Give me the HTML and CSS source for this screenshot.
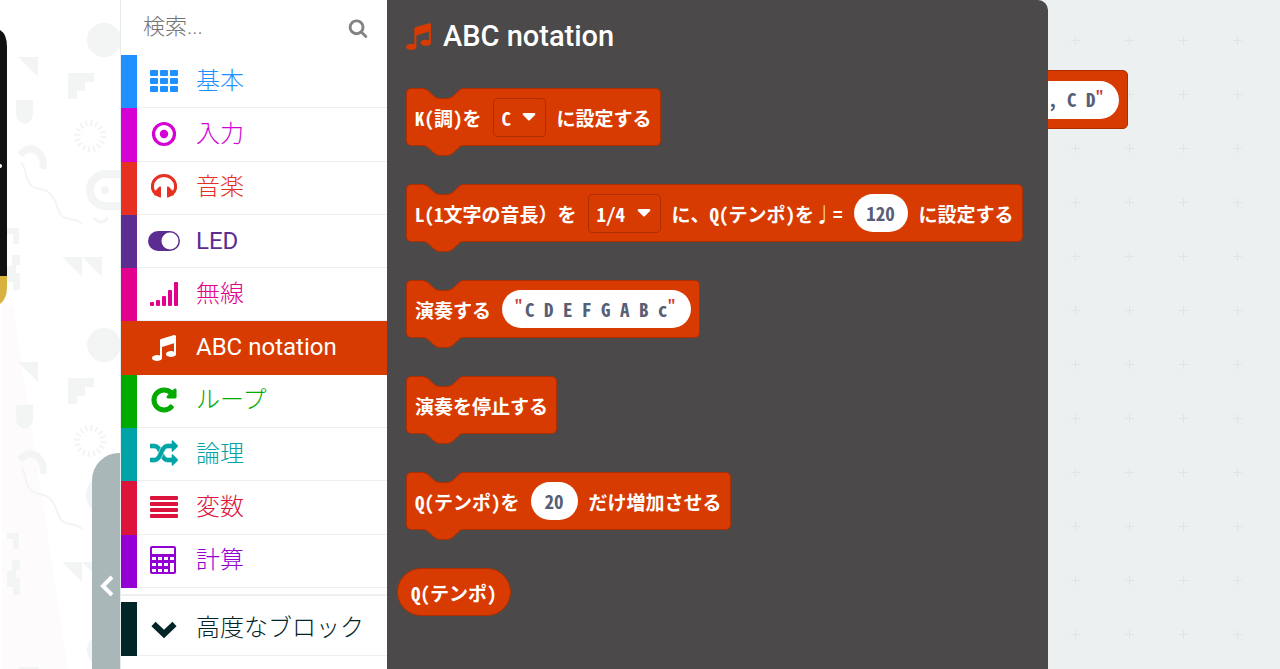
FILE: index.html
```html
<!DOCTYPE html>
<html lang="ja">

<head>
    <meta charset="UTF-8">
    <meta name="viewport" content="width=device-width, initial-scale=1.0">
    <title>ABC notation</title>
    <link rel="stylesheet" href="styles.css">
</head>

<body>
    <!-- shared shapes -->
    <svg class="defs" aria-hidden="true">
        <symbol id="music" viewBox="0 0 1792 1792">
            <path d="M1664 224v1120q0 50-34 89t-86 60.500-103.500 32-96.500 10.500-96.500-10.500-103.500-32-86-60.500-34-89 34-89 86-60.500 103.500-32 96.500-10.500q105 0 192 39v-537l-768 237v709q0 50-34 89t-86 60.500-103.500 32-96.500 10.500-96.500-10.500-103.500-32-86-60.500-34-89 34-89 86-60.500 103.500-32 96.500-10.500q105 0 192 39v-967q0-31 19-56.500t49-35.500l832-256q12-4 28-4 40 0 68 28t28 68z" />
        </symbol>
        <symbol id="tab" viewBox="0 0 42 12">
            <path d="M0 0H1Q5 0 8 3L12 7Q15 10 18 10H27Q30 10 33 7L37 3Q40 0 42 0Z" />
            <path class="edge" d="M0 .5H1Q5 .5 8 3.500L12 7.500Q15 10.500 18 10.500H27Q30 10.500 33 7.500L37 3.500Q40 .5 42 .5" />
        </symbol>
        <symbol id="doodles" viewBox="0 0 121 305" overflow="visible">
            <circle cx="104" cy="40" r="17" />
            <path d="M18 57h20v20zM68 73h26v9h-9v9h-8v8h-9zM16 100h17v14a8 9 0 0 1-17 0zM62 257h20v20zM82 257h20v20z" />
            <path d="M7 228h12v16h-6v-10H7zM12 255h8v10h-4v8h4v17h-7v-8H7v-16h5z" />
            <circle class="line" cx="90" cy="136" r="13" stroke-width="6" stroke-dasharray="2 3.100" />
            <path class="line" stroke-width="7" d="M20 155Q28 145 37 151Q45 158 43 169" />
            <path class="line" stroke-width="2" d="M21 163C28 169 23 179 32 186C41 192 46 186 54 199C59 208 58 218 70 219Q78 220 82 224" />
            <path class="line" stroke-width="8" d="M121 174H106a16 16 0 0 0 0 32H121" />
            <circle cx="105" cy="190" r="4" />
            <path class="line" stroke-width="3" d="M94 218Q101 226 108 218" />
        </symbol>
    </svg>

    <main class="editor">
        <aside class="simulator">
            <svg class="wallpaper" aria-hidden="true">
                <path class="beam" d="M2 305h11l55 364H2z" />
                <g class="doodles">
                    <use href="#doodles" width="121" height="305" />
                    <use href="#doodles" y="305" width="121" height="305" />
                    <use href="#doodles" y="610" width="121" height="305" />
                </g>
            </svg>
            <svg class="board" viewBox="0 0 8 275" aria-hidden="true">
                <path fill="#111" d="M0 1Q7 5 7 18V247H0z" />
                <path fill="#d8b13f" d="M0 247H7V258Q7 270 0 275z" />
                <circle cx="0" cy="137" r="2" fill="#fff" />
            </svg>
            <button class="collapse" aria-label="シミュレーターを隠す">
                <svg viewBox="0 0 16 24"><path d="M13 3L4 12L13 21" /></svg>
            </button>
        </aside>

        <nav class="toolbox">
            <div class="search">
                <input type="text" placeholder="検索..." aria-label="検索">
                <svg viewBox="0 0 1792 1792" aria-hidden="true">
                    <path d="M1216 832q0-185-131.500-316.500t-316.500-131.500-316.500 131.500-131.500 316.500 131.500 316.500 316.500 131.500 316.500-131.500 131.500-316.500zm512 832q0 52-38 90t-90 38q-54 0-90-38l-343-342q-179 124-399 124-143 0-273.500-55.500t-225-150-150-225-55.500-273.500 55.500-273.500 150-225 225-150 273.500-55.500 273.500 55.500 225 150 150 225 55.500 273.500q0 220-124 399l343 343q37 37 37 90z" />
                </svg>
            </div>
            <ul class="categories">
                <li><a class="basic" href="#basic">
                    <svg viewBox="0 0 28 28"><path d="M1 3h6q1 0 1 1v4q0 1-1 1H1Q0 9 0 8V4q0-1 1-1zM11 3h6q1 0 1 1v4q0 1-1 1h-6q-1 0-1-1V4q0-1 1-1zM21 3h6q1 0 1 1v4q0 1-1 1h-6q-1 0-1-1V4q0-1 1-1zM1 11h6q1 0 1 1v4q0 1-1 1H1q-1 0-1-1v-4q0-1 1-1zM11 11h6q1 0 1 1v4q0 1-1 1h-6q-1 0-1-1v-4q0-1 1-1zM21 11h6q1 0 1 1v4q0 1-1 1h-6q-1 0-1-1v-4q0-1 1-1zM1 19h6q1 0 1 1v4q0 1-1 1H1q-1 0-1-1v-4q0-1 1-1zM11 19h6q1 0 1 1v4q0 1-1 1h-6q-1 0-1-1v-4q0-1 1-1zM21 19h6q1 0 1 1v4q0 1-1 1h-6q-1 0-1-1v-4q0-1 1-1z" /></svg>
                    <span>基本</span></a></li>
                <li><a class="input" href="#input">
                    <svg viewBox="0 0 28 28"><circle cx="14" cy="14" r="10.500" fill="none" stroke="currentColor" stroke-width="3.200" /><circle cx="14" cy="14" r="4.200" /></svg>
                    <span>入力</span></a></li>
                <li><a class="sound" href="#sound">
                    <svg viewBox="0 0 28 28"><path d="M5 20Q2 17 2.500 13A11.500 10.500 0 0 1 25.500 13Q26 17 23 20" fill="none" stroke="currentColor" stroke-width="3" /><path d="M4 19L9 14Q11 12 11 15V23Q11 26 9 24L4 22zM24 19L19 14Q17 12 17 15V23Q17 26 19 24L24 22z" /></svg>
                    <span>音楽</span></a></li>
                <li><a class="led" href="#led">
                    <svg class="wide" viewBox="0 0 32 28"><path fill-rule="evenodd" d="M10 4H22a10 10 0 0 1 0 20H10a10 10 0 0 1 0-20zM22 5.500a8.500 8.500 0 0 0 0 17 8.500 8.500 0 0 0 0-17z" /></svg>
                    <span>LED</span></a></li>
                <li><a class="radio" href="#radio">
                    <svg viewBox="0 0 28 28"><path d="M1 22h2q1 0 1 1v2q0 1-1 1H1q-1 0-1-1v-2q0-1 1-1zM7 20h2q1 0 1 1v4q0 1-1 1H7q-1 0-1-1v-4q0-1 1-1zM13 16h2q1 0 1 1v8q0 1-1 1h-2q-1 0-1-1v-8q0-1 1-1zM19 10h2q1 0 1 1v14q0 1-1 1h-2q-1 0-1-1V11q0-1 1-1zM25 2h2q1 0 1 1v22q0 1-1 1h-2q-1 0-1-1V3q0-1 1-1z" /></svg>
                    <span>無線</span></a></li>
                <li><a class="abc selected" href="#abc">
                    <svg viewBox="0 0 28 28"><use href="#music" /></svg>
                    <span>ABC notation</span></a></li>
                <li><a class="loops" href="#loops">
                    <svg viewBox="0 0 1792 1792"><path stroke="currentColor" stroke-width="70" d="M1664 256v448q0 26-19 45t-45 19h-448q-42 0-59-40-17-39 14-69l138-138q-148-137-349-137-104 0-198.500 40.500t-163.500 109.500-109.500 163.500-40.500 198.500 40.500 198.500 109.500 163.500 163.500 109.500 198.500 40.500q119 0 225-52t179-147q7-10 23-12 15 0 25 9l137 138q9 8 9.500 20.500t-7.500 22.500q-109 132-264 204.500t-327 72.500q-156 0-298-61t-245-164-164-245-61-298 61-298 164-245 245-164 298-61q147 0 284.500 55.500t244.500 156.500l130-129q29-31 70-14 39 17 39 59z" /></svg>
                    <span>ループ</span></a></li>
                <li><a class="logic" href="#logic">
                    <svg viewBox="0 0 1792 1792"><path stroke="currentColor" stroke-width="40" d="M666 481q-60 92-137 273-22-45-37-72.500t-40.500-63.500-51-56.500-63-35-81.500-14.500h-224q-14 0-23-9t-9-23v-192q0-14 9-23t23-9h224q250 0 410 225zm1126 799q0 14-9 23l-320 320q-9 9-23 9-13 0-22.500-9.500t-9.500-22.500v-192q-32 0-85 .5t-81 1-73-1-71-5-64-10.500-63-18.500-58-28.500-59-40-55-53.500-56-69.500q59-93 136-273 22 45 37 72.500t40.500 63.500 51 56.500 63 35 81.500 14.500h256v-192q0-14 9-23t23-9q12 0 24 10l319 319q9 9 9 23zm0-896q0 14-9 23l-320 320q-9 9-23 9-13 0-22.500-9.500t-9.500-22.500v-192h-256q-48 0-87 15t-69 45-51 61.500-45 77.500q-32 62-78 171-29 66-49.500 111t-54 105-64 100-74 83-90 68.500-106.500 42-128 16.500h-224q-14 0-23-9t-9-23v-192q0-14 9-23t23-9h224q48 0 87-15t69-45 51-61.500 45-77.500q32-62 78-171 29-66 49.500-111t54-105 64-100 74-83 90-68.500 106.500-42 128-16.500h256v-192q0-14 9-23t23-9q12 0 24 10l319 319q9 9 9 23z" /></svg>
                    <span>論理</span></a></li>
                <li><a class="variables" href="#variables">
                    <svg viewBox="0 0 28 28"><path d="M1 3h26q1 0 1 1v2q0 1-1 1H1Q0 7 0 6V4q0-1 1-1zM1 9h26q1 0 1 1v2q0 1-1 1H1q-1 0-1-1v-2q0-1 1-1zM1 15h26q1 0 1 1v2q0 1-1 1H1q-1 0-1-1v-2q0-1 1-1zM1 21h26q1 0 1 1v2q0 1-1 1H1q-1 0-1-1v-2q0-1 1-1z" /></svg>
                    <span>変数</span></a></li>
                <li><a class="math" href="#math">
                    <svg viewBox="0 0 28 28"><path fill-rule="evenodd" d="M2 0h22q2 0 2 2v24q0 2-2 2H2q-2 0-2-2V2q0-2 2-2zM2 2v6h22V2zM2 11v3h4v-3zM8 11v3h4v-3zM14 11v3h4v-3zM20 11v3h4v-3zM2 17v3h4v-3zM8 17v3h4v-3zM14 17v3h4v-3zM20 17v9h4v-9zM2 23v3h4v-3zM8 23v3h4v-3zM14 23v3h4v-3z" /></svg>
                    <span>計算</span></a></li>
            </ul>
            <a class="advanced" href="#advanced">
                <svg viewBox="0 0 28 28"><path d="M3.500 10L14 20L24.500 10" fill="none" stroke="currentColor" stroke-width="6" /></svg>
                <span>高度なブロック</span></a>
        </nav>

        <section class="workspace">
            <svg class="grid" aria-hidden="true">
                <pattern id="cross" width="54" height="54" patternUnits="userSpaceOnUse">
                    <path d="M36 40.500h9M40.500 36v9" />
                </pattern>
                <rect width="100%" height="100%" fill="url(#cross)" />
            </svg>

            <div class="block placed">
                <label class="string"><q>"</q><input type="text" value=", C D" aria-label="メロディ"><q>"</q></label>
            </div>

            <div class="flyout">
                <h2><svg aria-hidden="true"><use href="#music" /></svg>ABC notation</h2>

                <div class="block">
                    <svg class="notch"><use href="#tab" /></svg>
                    <span>K(調)を</span>
                    <span class="pick">
                        <select aria-label="調"><option>C</option></select>
                        <svg viewBox="0 0 14 8"><path d="M2 0H12Q14 0 13 2L8 7Q7 8 6 7L1 2Q0 0 2 0Z" /></svg>
                    </span>
                    <span>に設定する</span>
                    <svg class="bump"><use href="#tab" /></svg>
                </div>

                <div class="block">
                    <svg class="notch"><use href="#tab" /></svg>
                    <span>L(1文字の音長）を</span>
                    <span class="pick length">
                        <select aria-label="音長"><option>1/4</option></select>
                        <svg viewBox="0 0 14 8"><path d="M2 0H12Q14 0 13 2L8 7Q7 8 6 7L1 2Q0 0 2 0Z" /></svg>
                    </span>
                    <span>に、Q(テンポ)を♩=</span>
                    <input class="number hundreds" type="text" value="120" aria-label="テンポ">
                    <span>に設定する</span>
                    <svg class="bump"><use href="#tab" /></svg>
                </div>

                <div class="block">
                    <svg class="notch"><use href="#tab" /></svg>
                    <span>演奏する</span>
                    <label class="string"><q>"</q><input class="melody" type="text" value="C D E F G A B c" aria-label="メロディ"><q>"</q></label>
                    <svg class="bump"><use href="#tab" /></svg>
                </div>

                <div class="block">
                    <svg class="notch"><use href="#tab" /></svg>
                    <span>演奏を停止する</span>
                    <svg class="bump"><use href="#tab" /></svg>
                </div>

                <div class="block">
                    <svg class="notch"><use href="#tab" /></svg>
                    <span>Q(テンポ)を</span>
                    <input class="number" type="text" value="20" aria-label="増加量">
                    <span>だけ増加させる</span>
                    <svg class="bump"><use href="#tab" /></svg>
                </div>

                <div class="block reporter">
                    <span>Q(テンポ)</span>
                </div>
            </div>
        </section>
    </main>
</body>

</html>
```

FILE: styles.css
```css
* {
    padding: 0;
    margin: 0;
    box-sizing: border-box;
}

body {
    font-family: Roboto, "Noto Sans CJK JP", sans-serif;
    background-color: #fff;
}

svg {
    display: block;
    flex: none;
    fill: currentColor;
}

.defs {
    position: absolute;
    width: 0;
    height: 0;
}

.editor {
    display: grid;
    grid-template-columns: 121px 266px 1fr;
    min-height: 100vh;
}

/* simulator */
.simulator {
    position: relative;
    overflow: hidden;
    border-right: 1px solid #e6eced;
}

.wallpaper {
    position: absolute;
    width: 100%;
    height: 100%;
}

.beam {
    fill: #fefbfc;
}

.doodles {
    fill: #f3f5f5;
    color: #f3f5f5;
}

.line {
    fill: none;
    stroke: #f3f5f5;
}

.board {
    position: absolute;
    top: 29px;
    left: 0;
    width: 8px;
    height: 275px;
}

.collapse {
    position: absolute;
    right: -1px;
    bottom: 0;
    width: 29px;
    height: 216px;
    padding-top: 50px;
    border: none;
    border-radius: 27px 0 0 0;
    background-color: #a9b7b8;
    cursor: pointer;
}

.collapse svg {
    width: 16px;
    height: 24px;
    margin-left: 7px;
    fill: none;
    stroke: #fff;
    stroke-width: 4;
}

/* toolbox */
.toolbox {
    background-color: #fff;
}

.search {
    display: flex;
    align-items: center;
    height: 55px;
    padding: 0 19px 0 22px;
    color: #838383;
}

.search input {
    flex: 1;
    min-width: 0;
    padding-bottom: 2px;
    border: none;
    outline: none;
    background: none;
    font-family: inherit;
    font-size: 22px;
    font-weight: 300;
}

.search input::placeholder {
    color: #757575;
}

.search svg {
    width: 20px;
    height: 20px;
}

.categories {
    display: grid;
    grid-auto-rows: 1fr;
    height: 533px;
    list-style: none;
}

.toolbox a {
    display: flex;
    align-items: center;
    gap: 18px;
    height: 100%;
    padding: 0 0 2px 13px;
    border-left: 16px solid;
    font-size: 24px;
    font-weight: 300;
    line-height: 36px;
    text-decoration: none;
    box-shadow: inset 0 -1px #ecf0f1;
}

.toolbox a svg {
    width: 28px;
    height: 28px;
}

.toolbox a .wide {
    width: 32px;
    margin: 0 -2px;
}

.toolbox .basic { color: #1e90ff; }
.toolbox .input { color: #d400d4; }
.toolbox .sound { color: #e63022; }
.toolbox .led { color: #5c2d91; font-weight: 400; }
.toolbox .radio { color: #e3008c; }
.toolbox .loops { color: #00aa00; }
.toolbox .logic { color: #00a4a6; }
.toolbox .variables { color: #dc143c; }
.toolbox .math { color: #9400d3; }

.toolbox .selected {
    color: #fff;
    font-weight: 400;
    background-color: #d83b01;
    border-left-color: #d83b01;
    box-shadow: none;
}

.toolbox .advanced {
    position: relative;
    height: 54px;
    margin-top: 14px;
    color: #022528;
}

.advanced::before {
    content: "";
    position: absolute;
    top: -8px;
    left: -16px;
    right: 0;
    height: 2px;
    background-color: #ecf0f1;
}

/* workspace */
.workspace {
    position: relative;
    overflow: hidden;
    background-color: #ecf0f1;
}

.grid {
    position: absolute;
    width: 100%;
    height: 100%;
}

.grid path {
    stroke: #dfe4e6;
}

.flyout {
    position: relative;
    display: flex;
    flex-direction: column;
    align-items: flex-start;
    gap: 38px;
    width: fit-content;
    min-height: 100%;
    padding: 20px 25px 20px 19px;
    border-radius: 0 10px 0 0;
    background-color: #4b4949;
}

.flyout h2 {
    display: flex;
    align-items: center;
    gap: 10px;
    height: 31px;
    margin-bottom: -1px;
    color: #fff;
    font-size: 29px;
    font-weight: 500;
}

.flyout h2 svg {
    width: 29px;
    height: 29px;
    margin-left: -2px;
    color: #d83b01;
}

.block {
    position: relative;
    display: flex;
    align-items: center;
    gap: 11px;
    height: 58px;
    padding: 0 8px;
    border: 1px solid #ad2f01;
    border-radius: 5px;
    background-color: #d83b01;
    color: #fff;
    font-family: "Noto Sans Mono CJK JP", "Noto Sans CJK JP", monospace;
    font-size: 19px;
    font-weight: 700;
    white-space: nowrap;
}

.block input,
.block select {
    border: none;
    outline: none;
    background: none;
    font: inherit;
}

.notch,
.bump {
    position: absolute;
    left: 14px;
    width: 42px;
    height: 12px;
}

.notch {
    top: -1px;
    color: #4b4949;
}

.bump {
    top: 56px;
    color: #d83b01;
}

.edge {
    fill: none;
    stroke: #ad2f01;
}

.pick {
    position: relative;
    width: 53px;
}

.pick.length {
    width: 73px;
}

.pick select {
    width: 100%;
    height: 39px;
    padding-left: 8px;
    border: 1px solid #ad2f01;
    border-radius: 4px;
    appearance: none;
    color: #fff;
}

.pick svg {
    position: absolute;
    top: 15px;
    right: 10px;
    width: 14px;
    height: 8px;
    pointer-events: none;
}

.block .number {
    width: 47px;
    height: 38px;
    padding-bottom: 2px;
    border-radius: 19px;
    background-color: #fff;
    color: #575e75;
    text-align: center;
}

.block .hundreds {
    width: 54px;
}

.string {
    display: flex;
    align-items: center;
    height: 38px;
    padding: 0 13px;
    border-radius: 19px;
    background-color: #fff;
}

.string q {
    align-self: flex-start;
    width: 10px;
    quotes: none;
    color: #c8403c;
    font-size: 14px;
    line-height: 30px;
}

.string input {
    width: 48px;
    padding-bottom: 2px;
    color: #575e75;
}

.string .melody {
    width: 143px;
}

.placed {
    position: absolute;
    top: 70px;
    right: 152px;
    height: 59px;
}

.reporter {
    height: 48px;
    margin-left: -9px;
    padding: 0 13px;
    border-radius: 24px;
}
```
